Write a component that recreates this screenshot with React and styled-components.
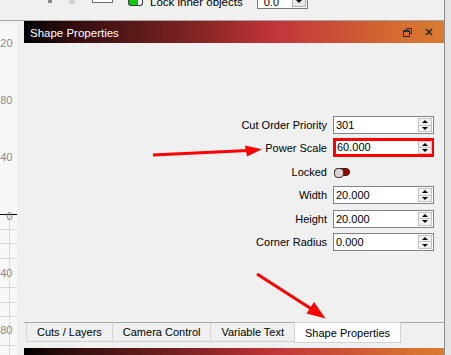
import React from 'react'
import styled, { createGlobalStyle } from 'styled-components'

const GlobalStyle = createGlobalStyle`
  html, body {
    margin: 0;
    padding: 0;
    background: #f0f0f0;
    overflow: hidden;
  }
  * { box-sizing: border-box; }
`

const Screen = styled.div`
  position: relative;
  width: 451px;
  height: 355px;
  display: flex;
  overflow: hidden;
  font-family: "Liberation Sans", Arial, sans-serif;
  font-size: 11px;
  color: #000;
  background: #f0f0f0;
`

const Main = styled.div`
  width: 444px;
  display: flex;
  flex-direction: column;
`

const RightEdge = styled.div`
  flex: 1;
  border-left: 1px solid #8e8e8e;
  background: #e4e4e4;
`

const Toolbar = styled.div`
  height: 21px;
  flex-shrink: 0;
  display: flex;
  align-items: flex-start;
  border-bottom: 1px solid #a6a6a6;
  overflow: hidden;
`

const ToolStub = styled.div`
  margin-left: ${({ $left }) => $left}px;
  width: ${({ $w }) => $w}px;
  height: ${({ $h }) => $h}px;
  background: ${({ $color }) => $color};
`

const ButtonStub = styled.div`
  margin-left: 17px;
  width: 21px;
  height: 3px;
  border: 1px solid #6e6e6e;
  border-top: none;
  background: #fff;
`

const GreenCheck = styled.div`
  margin-left: 15px;
  width: 15px;
  height: 6px;
  border: 1px solid #3a3a3a;
  border-top: none;
  border-radius: 0 0 3px 3px;
  background: linear-gradient(90deg, #00cc00 0, #00cc00 68%, #fafafa 68%);
`

const LockLabel = styled.span`
  margin-left: 7px;
  margin-top: -5px;
  font-size: 11.5px;
  line-height: 14px;
  white-space: nowrap;
`

const Combo = styled.div`
  margin-left: 14px;
  margin-top: -8px;
  width: 51px;
  height: 17px;
  display: flex;
  border: 1px solid #7a7a7a;
  background: #fff;
`

const ComboValue = styled.span`
  flex: 1;
  padding: 2px 0 0 6px;
  line-height: 14px;
`

const ComboButton = styled.span`
  width: 14px;
  margin: 1px;
  display: flex;
  align-items: flex-end;
  justify-content: center;
  padding-bottom: 3px;
  border: 1px solid #b0b0b0;
  background: #e8e8e8;
  &::after {
    content: '';
    border-left: 3px solid transparent;
    border-right: 3px solid transparent;
    border-top: 3px solid #000;
  }
`

const Workspace = styled.div`
  flex: 1;
  display: flex;
  min-height: 0;
`

const RulerBox = styled.div`
  width: 17px;
  margin-top: 3px;
  background: #f8f8f8;
  flex-shrink: 0;
`

const Dock = styled.div`
  flex: 1;
  margin-left: 7px;
  display: flex;
  flex-direction: column;
  min-height: 0;
  overflow: hidden;
`

const TitleBar = styled.div`
  height: 22px;
  flex-shrink: 0;
  display: flex;
  align-items: center;
  padding: 0 10px 0 6px;
  color: #fff;
  background: linear-gradient(90deg, #000 0%, #2e0c0c 10%, #561818 25%, #862525 42%, #b32f33 55%, #c2373a 61%, #cb5434 77%, #d56a31 88%, #d97b30 100%);
`

const TitleText = styled.span`
  flex: 1;
  font-size: 11.5px;
  padding-top: 1px;
`

const TitleIcons = styled.div`
  display: flex;
  align-items: center;
  gap: 13px;
  margin-right: 1px;
`

const Body = styled.div`
  height: 279px;
  flex-shrink: 0;
  padding: 73px 10px 0 0;
  display: grid;
  grid-template-columns: auto 101px;
  grid-auto-rows: 18px;
  row-gap: 5.4px;
  column-gap: 6px;
  justify-content: end;
  align-content: start;
`

const Label = styled.span`
  justify-self: end;
  align-self: center;
  white-space: nowrap;
`

const Field = styled.div`
  display: flex;
  height: ${({ $highlight }) => ($highlight ? 19 : 18)}px;
  border: ${({ $highlight }) => ($highlight ? '3px solid #ff0000' : '1px solid #7f8389')};
  margin-top: ${({ $highlight }) => ($highlight ? -1 : 0)}px;
  background: #fff;
`

const FieldValue = styled.span`
  flex: 1;
  padding-left: ${({ $highlight }) => ($highlight ? 1 : 2)}px;
  line-height: ${({ $highlight }) => ($highlight ? 13 : 16)}px;
  font-size: 11px;
`

const Spinner = styled.div`
  width: 14px;
  margin: ${({ $highlight }) => ($highlight ? '0 -1px 0 0' : '1px 1px')};
  display: flex;
  flex-direction: column;
`

const SpinButton = styled.span`
  flex: 1;
  display: flex;
  align-items: center;
  justify-content: center;
  border: 1px solid #c4c4c4;
  background: #f2f2f2;
  & + & { border-top: none; }
  &::after {
    content: '';
    border-left: 3px solid transparent;
    border-right: 3px solid transparent;
    ${({ $down }) => ($down ? 'border-top: 3px solid #000;' : 'border-bottom: 3px solid #000;')}
  }
`

const Toggle = styled.span`
  justify-self: start;
  align-self: center;
  margin-left: 1px;
  position: relative;
  width: 16px;
  height: 8px;
  border-radius: 4px;
  border: 1px solid #4a1010;
  background: #8e0000;
  &::before {
    content: '';
    position: absolute;
    left: -1px;
    top: -1px;
    width: 8px;
    height: 8px;
    border-radius: 4px;
    border: 1px solid #3a3030;
    background: #dcd4d4;
  }
`

const TabBar = styled.div`
  height: 21px;
  flex-shrink: 0;
  display: flex;
  align-items: flex-start;
  padding-left: 2px;
  border-top: 1px solid #a9a9a9;
`

const Tab = styled.div`
  height: ${({ $active }) => ($active ? 21 : 19)}px;
  margin-top: ${({ $active }) => ($active ? -1 : 0)}px;
  margin-left: -1px;
  padding: ${({ $active }) => ($active ? '1px' : '0')} 10px 0;
  display: flex;
  align-items: center;
  border: 1px solid #d2d2d2;
  border-top: ${({ $active }) => ($active ? '1px solid #d2d2d2' : 'none')};
  background: ${({ $active }) => ($active ? '#fff' : '#f0f0f0')};
  white-space: nowrap;
  position: relative;
  z-index: ${({ $active }) => ($active ? 1 : 0)};
  &:first-child { margin-left: 0; }
`

const BottomBar = styled(TitleBar)`
  margin-top: 5px;
`

const Annotations = styled.svg`
  position: absolute;
  left: 0;
  top: 0;
  pointer-events: none;
`

const RestoreIcon = () => (
  <svg width="9" height="9" viewBox="0 0 9 9">
    <path d="M3 0.5 H8.5 V5.5 H6.5 M3.5 0.5 V2.5" fill="none" stroke="#2b2b2b" />
    <rect x="0.5" y="2.5" width="6" height="6" fill="none" stroke="#2b2b2b" />
    <path d="M0.5 3.5 H6.5" stroke="#2b2b2b" />
  </svg>
)

const CloseIcon = () => (
  <svg width="8" height="8" viewBox="0 0 8 8">
    <path d="M1 1 L7 7 M7 1 L1 7" stroke="#2b2b2b" strokeWidth="1.7" />
  </svg>
)

const rulerLabels = [
  { y: 22.5, t: '120' },
  { y: 80, t: '80' },
  { y: 137, t: '40' },
  { y: 196, t: '0' },
  { y: 253, t: '-40' },
  { y: 310, t: '-80' },
]

const Ruler = () => {
  const zero = 190
  const step = 14.6
  const grid = [1, 2, 3, 5, 6, 7, 9, 10]
  return (
    <RulerBox>
      <svg width="17" height="331">
        <line x1="9.5" y1={zero + 1} x2="9.5" y2="331" stroke="#d9d9d9" />
        {grid.map((k) => (
          <line key={k} x1="0" y1={Math.round(zero + k * step) + 0.5} x2="17" y2={Math.round(zero + k * step) + 0.5} stroke="#d9d9d9" />
        ))}
        <line x1="0" y1={zero + 0.5} x2="17" y2={zero + 0.5} stroke="#000" />
        {rulerLabels.map((l) => (
          <text key={l.t} x="12.5" y={l.y} textAnchor="end" fontSize="11" fill="#8a8a8a" fontFamily="Liberation Sans, Arial, sans-serif">
            {l.t}
          </text>
        ))}
      </svg>
    </RulerBox>
  )
}

const rows = [
  { label: 'Cut Order Priority', value: '301' },
  { label: 'Power Scale', value: '60.000', highlight: true },
  { label: 'Locked', toggle: true },
  { label: 'Width', value: '20.000' },
  { label: 'Height', value: '20.000' },
  { label: 'Corner Radius', value: '0.000' },
]

const tabs = ['Cuts / Layers', 'Camera Control', 'Variable Text', 'Shape Properties']

const App = () => {
  return (
    <Screen>
      <GlobalStyle />
      <Main>
        <Toolbar>
          <ToolStub $left={48} $w={4} $h={3} $color="#8a8a8a" />
          <ToolStub $left={17} $w={6} $h={4} $color="#d0d0d0" />
          <ButtonStub />
          <GreenCheck />
          <LockLabel>Lock inner objects</LockLabel>
          <Combo>
            <ComboValue>0.0</ComboValue>
            <ComboButton />
          </Combo>
        </Toolbar>
        <Workspace>
          <Ruler />
          <Dock>
            <TitleBar>
              <TitleText>Shape Properties</TitleText>
              <TitleIcons>
                <RestoreIcon />
                <CloseIcon />
              </TitleIcons>
            </TitleBar>
            <Body>
              {rows.map((r) => (
                <React.Fragment key={r.label}>
                  <Label>{r.label}</Label>
                  {r.toggle ? (
                    <Toggle />
                  ) : (
                    <Field $highlight={r.highlight}>
                      <FieldValue $highlight={r.highlight}>{r.value}</FieldValue>
                      <Spinner $highlight={r.highlight}>
                        <SpinButton />
                        <SpinButton $down />
                      </Spinner>
                    </Field>
                  )}
                </React.Fragment>
              ))}
            </Body>
            <TabBar>
              {tabs.map((t, i) => (
                <Tab key={t} $active={i === tabs.length - 1}>{t}</Tab>
              ))}
            </TabBar>
            <BottomBar />
          </Dock>
        </Workspace>
      </Main>
      <RightEdge />
      <Annotations width="451" height="355">
        <line x1="153" y1="155" x2="248" y2="150.5" stroke="#ff0000" strokeWidth="3" />
        <polygon points="245,145.5 262,149.2 247,156.5" fill="#ff0000" />
        <line x1="257" y1="274" x2="313" y2="310" stroke="#ff0000" strokeWidth="3" />
        <polygon points="306.5,313.5 314,302 325.5,318.5" fill="#ff0000" />
      </Annotations>
    </Screen>
  )
}

export default App
